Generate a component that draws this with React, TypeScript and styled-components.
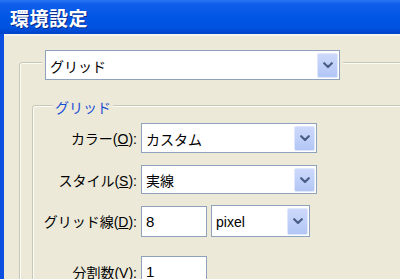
import React from "react";
import styled, { createGlobalStyle } from "styled-components";

const Global = createGlobalStyle`
  html, body { margin: 0; padding: 0; background: #ECE9D8; overflow: hidden; }
  body { font-family: "Liberation Sans", "Noto Sans CJK JP", sans-serif; }
`;

const Window = styled.div`
  width: 460px;
  height: 279px;
  display: flex;
  flex-direction: column;
  overflow: hidden;
`;

const TitleBar = styled.div`
  height: 34px;
  flex: none;
  box-sizing: border-box;
  display: flex;
  align-items: center;
  padding-left: 10px;
  background: linear-gradient(to bottom, #2b76f3 0%, #0f5eea 12%, #0055e5 55%, #0052e0 82%, #0043c8 100%);
  color: #fff;
  font: bold 19px "Noto Sans CJK JP", sans-serif;
  text-shadow: 1px 1px 0 #0b2a8a;
  letter-spacing: 0.5px;
`;

const Body = styled.div`
  flex: 1;
  background: #ECE9D8;
  border-left: 4px solid #0a4fdf;
  box-shadow: inset 0 2px 0 #f5f4ec;
  padding: 16px 0 0 15px;
  overflow: hidden;
`;

const Group = styled.fieldset<{ $pt: number; $pl: number }>`
  margin: 0;
  min-width: 0;
  min-height: 400px;
  padding: ${(p) => p.$pt}px 0 0 ${(p) => p.$pl}px;
  border: 1px solid #c9c7b6;
  box-shadow: inset 1px 1px 0 #fbfbf7;
  border-radius: 3px;
`;

const ComboLegend = styled.legend`
  height: 24px;
  padding: 0 3px;
  margin-left: 10px;
  background: #ECE9D8;
`;

const TextLegend = styled.legend`
  height: 16px;
  line-height: 16px;
  padding: 0 2px;
  margin-left: 20px;
  color: #1a4fd4;
  font: 14px "Noto Sans CJK JP", sans-serif;
  background: #ECE9D8;
`;

const Rows = styled.div`
  display: flex;
  flex-direction: column;
`;

const Row = styled.div<{ $top: number }>`
  display: flex;
  align-items: center;
  gap: 4px;
  margin-top: ${(p) => p.$top}px;
`;

const Label = styled.span`
  width: 104px;
  flex: none;
  text-align: right;
  font-size: 14px;
  color: #000;
  white-space: nowrap;
`;

const Combo = styled.div<{ $w: number; $h: number; $overhang?: number }>`
  width: ${(p) => p.$w}px;
  height: ${(p) => p.$h}px;
  margin-bottom: ${(p) => -(p.$overhang || 0)}px;
  box-sizing: border-box;
  border: 1px solid #8ea2bd;
  background: #fff;
  display: flex;
  align-items: stretch;
  padding: 2px 1px 1px 4px;
  font-size: 14px;
  color: #000;
`;

const ComboText = styled.span`
  flex: 1;
  display: flex;
  align-items: center;
  white-space: nowrap;
`;

const DropBtn = styled.span`
  width: 21px;
  flex: none;
  box-sizing: border-box;
  border: 1px solid #dfe7fc;
  border-radius: 2px;
  background: linear-gradient(to bottom, #cdd9fb 0%, #c0d0f8 50%, #b2c5f5 100%);
  display: flex;
  align-items: center;
  justify-content: center;
`;

const TextBox = styled.div<{ $w: number; $h: number }>`
  width: ${(p) => p.$w}px;
  height: ${(p) => p.$h}px;
  box-sizing: border-box;
  border: 1px solid #8ea2bd;
  background: #fff;
  display: flex;
  align-items: center;
  padding: 0 4px;
  font-size: 15px;
  color: #000;
`;

const Chevron = () => (
  <svg width="10" height="7" viewBox="0 0 10 7">
    <polyline points="1.2,1.2 5,5 8.8,1.2" fill="none" stroke="#4a5f86" strokeWidth="2.2" strokeLinecap="round" strokeLinejoin="round" />
  </svg>
);

const Select = ({ w, h, text, overhang }: { w: number; h: number; text: string; overhang?: number }) => (
  <Combo $w={w} $h={h} $overhang={overhang}>
    <ComboText>{text}</ComboText>
    <DropBtn>
      <Chevron />
    </DropBtn>
  </Combo>
);

export default function App() {
  return (
    <>
      <Global />
      <Window>
        <TitleBar>環境設定</TitleBar>
        <Body>
          <Group $pt={23} $pl={12}>
            <ComboLegend>
              <Select w={295} h={30} text="グリッド" overhang={6} />
            </ComboLegend>
            <Group $pt={10} $pl={0}>
              <TextLegend>グリッド</TextLegend>
              <Rows>
                <Row $top={0}>
                  <Label>
                    カラー(<u>O</u>):
                  </Label>
                  <Select w={176} h={30} text="カスタム" />
                </Row>
                <Row $top={12}>
                  <Label>
                    スタイル(<u>S</u>):
                  </Label>
                  <Select w={176} h={29} text="実線" />
                </Row>
                <Row $top={11}>
                  <Label>
                    グリッド線(<u>D</u>):
                  </Label>
                  <TextBox $w={66} $h={31}>8</TextBox>
                  <Select w={99} h={32} text="pixel" />
                </Row>
                <Row $top={19}>
                  <Label>
                    分割数(<u>V</u>):
                  </Label>
                  <TextBox $w={66} $h={31}>1</TextBox>
                </Row>
              </Rows>
            </Group>
          </Group>
        </Body>
      </Window>
    </>
  );
}
